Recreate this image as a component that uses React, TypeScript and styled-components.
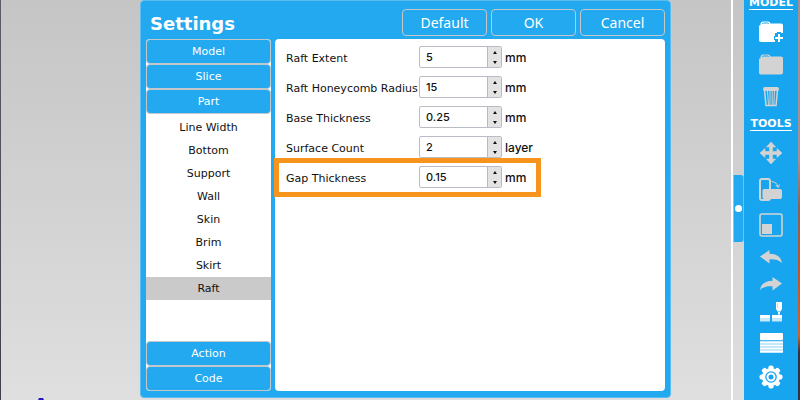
import React, { useState } from 'react';
import styled, { createGlobalStyle, css } from 'styled-components';

const blue = '#22a9ef';
const line = '#c3c7cb';
const iconGray = '#d3d3d3';

const GlobalStyle = createGlobalStyle`
  * { box-sizing: border-box; }
  body { margin: 0; overflow: hidden; }
  button, input { font: inherit; }
`;

const Page = styled.div`
  display: flex;
  min-height: 100vh;
  padding: 0 2px 0 1px;
  background:
    linear-gradient(#5b5c68, #3d404c) left / 1px 100% no-repeat,
    linear-gradient(#a58f92 0 40%, #8d6259 52%, #c6532b 68%, #d0622f 84%, #2f3342 88% 100%);
  font-family: 'DejaVu Sans', Verdana, sans-serif;
`;

const Canvas = styled.main`
  position: relative;
  flex: 1;
  min-width: 0;
  display: flex;
  padding: 0 60px 2px 139px;
  background: linear-gradient(#c5c5c5, #dfdfdf);
`;

const AxisTip = styled.svg`
  position: absolute;
  left: 37px;
  bottom: 0;
  width: 6px;
  height: 2px;
`;

const Dialog = styled.section`
  flex: 1;
  min-width: 0;
  display: flex;
  flex-direction: column;
  padding: 0 5px 6px;
  background: ${blue};
  border: 1px solid #5cbcf2;
  border-radius: 4px;
  box-shadow: 0 0 1px #f0d8cc;
`;

const DialogHeader = styled.header`
  display: flex;
  align-items: center;
  justify-content: space-between;
  height: 38px;
  padding: 8px 0 3px 4px;
`;

const Title = styled.h1`
  margin: 0;
  padding-top: 3px;
  color: #fff;
  font-size: 18px;
  line-height: 22px;
  font-family: 'DejaVu Sans', Verdana, sans-serif;
`;

const HeaderActions = styled.div`
  display: flex;
  gap: 4px;
`;

const ActionButton = styled.button`
  width: 85px;
  height: 27px;
  padding: 0;
  color: #fff;
  background: transparent;
  border: 1px solid ${line};
  border-radius: 4px;
  font-family: 'Noto Sans', sans-serif;
  font-size: 14px;
`;

const DialogBody = styled.div`
  flex: 1;
  display: flex;
  gap: 4px;
`;

const Categories = styled.nav`
  display: flex;
  flex-direction: column;
  width: 125px;
  background: #fff;
  border-radius: 4px;
`;

const CategoryButton = styled.button`
  height: 25px;
  padding: 0;
  color: #fff;
  background: ${blue};
  border: 1px solid ${line};
  border-radius: 4px;
  font-size: 11px;
`;

const SubList = styled.div`
  flex: 1;
  display: flex;
  flex-direction: column;
  padding-top: 2px;
`;

const SubButton = styled.button<{ $selected: boolean }>`
  height: 23px;
  padding: 0;
  color: #111;
  background: ${(p) => (p.$selected ? '#cacaca' : 'transparent')};
  border: 0;
  font-size: 11px;
`;

const Panel = styled.div`
  flex: 1;
  min-width: 0;
  padding: 7px 11px;
  background: #fff;
  border-radius: 4px;
`;

const Fields = styled.form`
  display: flex;
  flex-direction: column;
  gap: 8px;
  max-width: 255px;
`;

const FieldRow = styled.div<{ $highlighted?: boolean }>`
  position: relative;
  display: grid;
  grid-template-columns: 133px 83px 1fr;
  align-items: center;
  height: 22px;
  ${(p) =>
    p.$highlighted &&
    css`
      &::after {
        content: '';
        position: absolute;
        inset: -8px 0 -9px -12px;
        border: 5px solid #f7941d;
        pointer-events: none;
      }
    `}
`;

const FieldLabel = styled.label`
  padding-top: 2px;
  color: #111;
  font-size: 11px;
  white-space: nowrap;
`;

const Unit = styled.span`
  padding-left: 3px;
  color: #111;
  font: 500 12px Inter, sans-serif;
`;

const Spin = styled.div`
  display: flex;
  height: 22px;
  background: #fff;
  border: 1px solid #b9bcc4;
  border-radius: 2px;
  overflow: hidden;
`;

const SpinInput = styled.input`
  flex: 1;
  min-width: 0;
  padding: 0 6px;
  border: 0;
  outline: 0;
  color: #111;
  background: transparent;
  font: 500 11px Inter, sans-serif;
`;

const SpinArrows = styled.div`
  display: flex;
  flex-direction: column;
  width: 14px;
  background: #e3e3e3;
  border-left: 1px solid #b9b9b9;
`;

const SpinButton = styled.button`
  flex: 1;
  display: flex;
  align-items: center;
  justify-content: center;
  padding: 0;
  border: 0;
  background: transparent;
`;

const Divider = styled.div`
  width: 2px;
  background: #fff;
`;

const Gutter = styled.div`
  width: 11px;
  padding-top: 175px;
  background: linear-gradient(#c5c5c5, #dfdfdf);
`;

const CollapseHandle = styled.button`
  display: flex;
  align-items: center;
  justify-content: center;
  width: 100%;
  height: 67px;
  padding: 0;
  background: ${blue};
  border: 0;
  border-left: 1px solid #7cc9f3;
  border-right: 1px solid #6cc3f3;
  border-radius: 0 3px 3px 0;

  &::after {
    content: '';
    width: 7px;
    height: 7px;
    border-radius: 50%;
    background: #fff;
  }
`;

const Toolbar = styled.aside`
  display: flex;
  flex-direction: column;
  align-items: center;
  width: 54px;
  background: #18a5ef;
`;

const ToolbarTitle = styled.h2<{ $first?: boolean }>`
  margin: ${(p) => (p.$first ? '-4px 0 5px' : '4px 0 4px')};
  color: #fff;
  border-bottom: 1px solid #fff;
  font-size: 11px;
  line-height: 13px;
`;

const ToolButton = styled.button<{ $height: number }>`
  display: flex;
  align-items: center;
  justify-content: center;
  width: 36px;
  height: ${(p) => p.$height}px;
  padding: 0;
  border: 0;
  background: transparent;

  svg { flex: none; display: block; }
`;

const folderShape = 'M0 5.5Q0 4 1.5 4V2.5Q2 .5 4 .5H9Q11 .5 11.5 2.5H22Q24 2.5 24 4.5';

const Icons = {
  addFolder: (
    <svg width="24" height="22" viewBox="0 0 24 22">
      <path fill="#fff" d={`${folderShape}V12H16V21H2Q0 21 0 19Z`} />
      <path stroke="#18a5ef" d="M3.5 3Q3.5 2 4.5 2H8.5Q9.5 2 9.5 3" fill="none" />
      <path stroke="#18a5ef" strokeWidth="4" d="M20 11V22M15 17H24" />
      <path stroke="#fff" strokeWidth="2" d="M20 13V21M16 17H24" />
    </svg>
  ),
  folder: (
    <svg width="24" height="21" viewBox="0 0 24 21">
      <path fill={iconGray} d={`${folderShape}V18.5Q24 20.5 22 20.5H2Q0 20.5 0 18.5Z`} />
      <path stroke="#18a5ef" d="M3.5 3Q3.5 2 4.5 2H8.5Q9.5 2 9.5 3" fill="none" />
    </svg>
  ),
  trash: (
    <svg width="16" height="20" viewBox="0 0 16 20" fill="none" stroke={iconGray}>
      <rect x="0.5" y="0.5" width="15" height="3" rx="1" fill={iconGray} />
      <path strokeWidth="1.5" d="M1.5 3L3 18.5H13L14.5 3" />
      <path d="M4.5 4L5.5 18M7 4V18M9.2 4V18M11.5 4L10.8 18" />
    </svg>
  ),
  move: (
    <svg width="22" height="22" viewBox="0 0 22 22" fill={iconGray}>
      <path d="M11 0L15.5 5H12.5V9.5H17V6.5L22 11L17 15.5V12.5H12.5V17H15.5L11 22L6.5 17H9.5V12.5H5V15.5L0 11L5 6.5V9.5H9.5V5H6.5Z" stroke={iconGray} strokeWidth="0.6" />
    </svg>
  ),
  rotate: (
    <svg width="24" height="23" viewBox="0 0 24 23" fill="none" stroke={iconGray}>
      <rect x="1" y="1" width="10" height="21" rx="2" strokeWidth="2" />
      <rect x="4" y="11.5" width="18.5" height="9" rx="1" fill={iconGray} />
      <path d="M12.5 3.5Q18 4 19 9M16.8 7L19.2 9.6L20.5 6.5" />
    </svg>
  ),
  scale: (
    <svg width="24" height="24" viewBox="0 0 24 24">
      <rect x="1" y="1" width="22" height="22" rx="2" fill="none" stroke={iconGray} strokeWidth="1.6" />
      <rect x="3" y="11" width="10" height="10" fill={iconGray} />
    </svg>
  ),
  undo: (
    <svg width="22" height="14" viewBox="0 0 22 14">
      <path fill={iconGray} d="M0 6.5L9.5 0V3.8C17 4 21 7 22 13C18.5 9.6 15 9 9.5 9.2V13.5Z" />
    </svg>
  ),
  redo: (
    <svg width="22" height="14" viewBox="0 0 22 14">
      <path fill={iconGray} d="M22 6.5L12.5 0V3.8C5 4 1 7 0 13C3.5 9.6 7 9 12.5 9.2V13.5Z" />
    </svg>
  ),
  support: (
    <svg width="22" height="20" viewBox="0 0 22 20" fill="#fff">
      <path d="M16 0H22V7L20.5 9.5H17.5L16 7ZM18 10H20V11.5L19.3 13H18.7L18 11.5Z" />
      <path d="M0 13H10V16H0ZM12 13H22V16H12Z" />
      <path opacity="0.75" d="M0 16H10V19.5H0ZM12 16H22V19.5H12Z" />
      <path fill={blue} d="M17 1H18V6H17Z" opacity="0.35" />
    </svg>
  ),
  layers: (
    <svg width="23" height="20" viewBox="0 0 23 20" fill="#fff">
      <rect width="23" height="7" y="0" rx="1" />
      <path opacity="0.75" d="M0 7H23V20H0Z" />
      <path stroke="#fff" d="M0 9.5H23M0 12.5H23M0 15.5H23M0 18.5H23" />
      <path stroke={blue} opacity="0.7" d="M0 7.5H23" />
    </svg>
  ),
  gear: (
    <svg width="24" height="24" viewBox="-12 -12 24 24">
      {[0, 45, 90, 135].map((angle) => (
        <rect key={angle} x="-2.6" y="-11.5" width="5.2" height="23" rx="2" fill="#fff" transform={`rotate(${angle})`} />
      ))}
      <circle r="9" fill="#fff" />
      <circle r="5.8" fill="#18a5ef" />
      <circle r="3.5" fill="none" stroke="#fff" strokeWidth="2" />
    </svg>
  ),
};

type Tool = { label: string; icon: keyof typeof Icons; height: number };

const modelTools: Tool[] = [
  { label: 'Add model', icon: 'addFolder', height: 33 },
  { label: 'Open model', icon: 'folder', height: 33 },
  { label: 'Delete model', icon: 'trash', height: 32 },
];

const editTools: Tool[] = [
  { label: 'Move', icon: 'move', height: 36 },
  { label: 'Rotate', icon: 'rotate', height: 36 },
  { label: 'Scale', icon: 'scale', height: 36 },
  { label: 'Undo', icon: 'undo', height: 27 },
  { label: 'Redo', icon: 'redo', height: 27 },
  { label: 'Supports', icon: 'support', height: 29 },
  { label: 'Layers', icon: 'layers', height: 34 },
  { label: 'Settings', icon: 'gear', height: 34 },
];

const partPages = ['Line Width', 'Bottom', 'Support', 'Wall', 'Skin', 'Brim', 'Skirt', 'Raft'];

const fields = [
  { id: 'extent', label: 'Raft Extent', value: '5', step: 1, unit: 'mm' },
  { id: 'radius', label: 'Raft Honeycomb Radius', value: '15', step: 1, unit: 'mm' },
  { id: 'base', label: 'Base Thickness', value: '0.25', step: 0.05, unit: 'mm' },
  { id: 'surface', label: 'Surface Count', value: '2', step: 1, unit: 'layer' },
  { id: 'gap', label: 'Gap Thickness', value: '0.15', step: 0.05, unit: 'mm', highlighted: true },
];

function SpinBox({ id, initial, step }: { id: string; initial: string; step: number }) {
  const [value, setValue] = useState(initial);
  const change = (delta: number) => setValue(String(Number(((Number(value) || 0) + delta).toFixed(2))));
  return (
    <Spin>
      <SpinInput id={id} inputMode="decimal" value={value} onChange={(e) => setValue(e.target.value)} />
      <SpinArrows>
        <SpinButton type="button" aria-label="Increase" onClick={() => change(step)}>
          <svg width="4" height="3" viewBox="0 0 4 3"><path d="M2 0L4 3H0Z" fill="#111" /></svg>
        </SpinButton>
        <SpinButton type="button" aria-label="Decrease" onClick={() => change(-step)}>
          <svg width="4" height="3" viewBox="0 0 4 3"><path d="M2 3L4 0H0Z" fill="#111" /></svg>
        </SpinButton>
      </SpinArrows>
    </Spin>
  );
}

function ToolGroup({ tools }: { tools: Tool[] }) {
  return (
    <>
      {tools.map((tool) => (
        <ToolButton key={tool.label} type="button" aria-label={tool.label} $height={tool.height}>
          {Icons[tool.icon]}
        </ToolButton>
      ))}
    </>
  );
}

export default function App() {
  const [page, setPage] = useState('Raft');
  return (
    <>
      <GlobalStyle />
      <Page>
        <Canvas>
          <AxisTip viewBox="0 0 6 2"><path d="M1 0H5L6 2H0Z" fill="#2518c4" /></AxisTip>
          <Dialog>
            <DialogHeader>
              <Title>Settings</Title>
              <HeaderActions>
                <ActionButton type="button">Default</ActionButton>
                <ActionButton type="button">OK</ActionButton>
                <ActionButton type="button">Cancel</ActionButton>
              </HeaderActions>
            </DialogHeader>
            <DialogBody>
              <Categories>
                <CategoryButton type="button">Model</CategoryButton>
                <CategoryButton type="button">Slice</CategoryButton>
                <CategoryButton type="button">Part</CategoryButton>
                <SubList>
                  {partPages.map((name) => (
                    <SubButton key={name} type="button" $selected={name === page} onClick={() => setPage(name)}>
                      {name}
                    </SubButton>
                  ))}
                </SubList>
                <CategoryButton type="button">Action</CategoryButton>
                <CategoryButton type="button">Code</CategoryButton>
              </Categories>
              <Panel>
                <Fields>
                  {fields.map((field) => (
                    <FieldRow key={field.id} $highlighted={field.highlighted}>
                      <FieldLabel htmlFor={field.id}>{field.label}</FieldLabel>
                      <SpinBox id={field.id} initial={field.value} step={field.step} />
                      <Unit>{field.unit}</Unit>
                    </FieldRow>
                  ))}
                </Fields>
              </Panel>
            </DialogBody>
          </Dialog>
        </Canvas>
        <Divider />
        <Gutter>
          <CollapseHandle type="button" aria-label="Toggle toolbar" />
        </Gutter>
        <Toolbar>
          <ToolbarTitle $first>MODEL</ToolbarTitle>
          <ToolGroup tools={modelTools} />
          <ToolbarTitle>TOOLS</ToolbarTitle>
          <ToolGroup tools={editTools} />
        </Toolbar>
      </Page>
    </>
  );
}
